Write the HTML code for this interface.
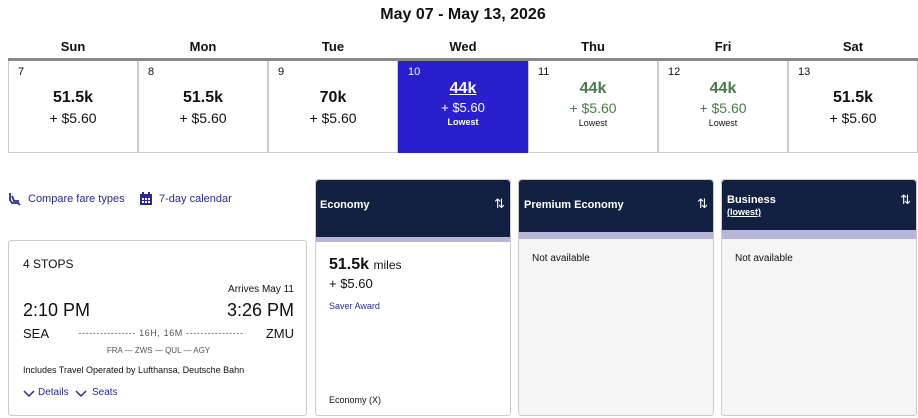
<!DOCTYPE html>
<html><head><style>
*{margin:0;padding:0;box-sizing:border-box}
body{width:918px;height:418px;background:#fff;font-family:"Liberation Sans",sans-serif;color:#111;position:relative;overflow:hidden}
.a{position:absolute}
.title{left:0;width:926px;top:6px;text-align:center;font-size:16px;font-weight:bold}
.dh{top:39px;width:130px;text-align:center;font-size:13px;font-weight:bold}
.bar{left:8px;top:58px;width:910px;height:3px;background:#888}
.cell{top:61px;width:130px;height:92px;border:1px solid #ccc;border-top:none;text-align:center}
.cell .n{position:absolute;left:9px;top:5px;font-size:11px}
.cell .m{margin-top:28px;font-size:16px;font-weight:bold}
.cell .p{font-size:14px;margin-top:3px}
.cell .l{font-size:9px;font-weight:bold;margin-top:2px}
.g{color:#4b7a4a}
.sel{background:#2a1fcc;color:#fff;border-color:#2a1fcc}
.link{color:#2b2a8c;font-size:11px;top:193px}
.card{border:1px solid #ccc;border-radius:3px}
.hd{background:#122142;color:#fff;font-size:11px;font-weight:bold;border-radius:3px 3px 0 0}
.strip{background:#b7b5d8;height:5px}
</style></head><body>
<div class="a title">May 07 - May 13, 2026</div>
<div class="a dh" style="left:8px">Sun</div>
<div class="a dh" style="left:138px">Mon</div>
<div class="a dh" style="left:268px">Tue</div>
<div class="a dh" style="left:398px">Wed</div>
<div class="a dh" style="left:528px">Thu</div>
<div class="a dh" style="left:658px">Fri</div>
<div class="a dh" style="left:788px">Sat</div>
<div class="a bar"></div>
<div class="a cell" style="left:8px"><span class="n">7</span><div class="m">51.5k</div><div class="p">+ $5.60</div></div>
<div class="a cell" style="left:138px"><span class="n">8</span><div class="m">51.5k</div><div class="p">+ $5.60</div></div>
<div class="a cell" style="left:268px"><span class="n">9</span><div class="m">70k</div><div class="p">+ $5.60</div></div>
<div class="a cell sel" style="left:398px"><span class="n">10</span><div class="m" style="margin-top:19px;text-decoration:underline">44k</div><div class="p" style="font-size:13px;margin-top:2px">+ $5.60</div><div class="l">Lowest</div></div>
<div class="a cell" style="left:528px"><span class="n">11</span><div class="m g" style="margin-top:19px">44k</div><div class="p g" style="margin-top:2px">+ $5.60</div><div class="l" style="font-weight:normal">Lowest</div></div>
<div class="a cell" style="left:658px"><span class="n">12</span><div class="m g" style="margin-top:19px">44k</div><div class="p g" style="margin-top:2px">+ $5.60</div><div class="l" style="font-weight:normal">Lowest</div></div>
<div class="a cell" style="left:788px"><span class="n">13</span><div class="m">51.5k</div><div class="p">+ $5.60</div></div>

<svg class="a" style="left:8px;top:192px" width="14" height="14" viewBox="0 0 14 14"><path d="M2 1v7l2 3h7M4 4l2 5h5M10 11l2 2" stroke="#2b2a8c" stroke-width="1.8" fill="none"/></svg>
<div class="a link" style="left:28px">Compare fare types</div>
<svg class="a" style="left:140px;top:192px" width="12" height="13" viewBox="0 0 12 13"><rect x="0" y="2" width="12" height="11" fill="#2b2a8c"/><rect x="2" y="0" width="2" height="3" fill="#2b2a8c"/><rect x="8" y="0" width="2" height="3" fill="#2b2a8c"/><g fill="#fff"><rect x="2" y="6" width="2" height="2"/><rect x="5" y="6" width="2" height="2"/><rect x="8" y="6" width="2" height="2"/><rect x="2" y="9" width="2" height="2"/><rect x="5" y="9" width="2" height="2"/><rect x="8" y="9" width="2" height="2"/></g></svg>
<div class="a link" style="left:159px">7-day calendar</div>

<div class="a card" style="left:8px;top:240px;width:299px;height:176px">
<div class="a" style="left:14px;top:16px;font-size:12px">4 STOPS</div>
<div class="a" style="right:12px;top:43px;font-size:10px">Arrives May 11</div>
<div class="a" style="left:14px;top:59px;font-size:18px">2:10 PM</div>
<div class="a" style="right:12px;top:59px;font-size:18px">3:26 PM</div>
<div class="a" style="left:14px;top:85px;font-size:13px">SEA</div>
<div class="a" style="right:12px;top:85px;font-size:13px">ZMU</div>
<div class="a" style="left:46px;top:87px;width:212px;text-align:center;font-size:9px;color:#555;letter-spacing:0.6px;white-space:nowrap">---------------- 16H, 16M ----------------</div>
<div class="a" style="left:14px;top:105px;width:271px;text-align:center;font-size:8px;color:#555">FRA — ZWS — QUL — AGY</div>
<div class="a" style="left:14px;top:124px;font-size:9px">Includes Travel Operated by Lufthansa, Deutsche Bahn</div>
<svg class="a" style="left:14px;top:149px" width="12" height="8" viewBox="0 0 12 8"><path d="M1 1l5 5 5-5" stroke="#2b2a8c" stroke-width="1.5" fill="none"/></svg>
<div class="a" style="left:29px;top:146px;font-size:10px;color:#2b2a8c">Details</div>
<svg class="a" style="left:66px;top:149px" width="12" height="8" viewBox="0 0 12 8"><path d="M1 1l5 5 5-5" stroke="#2b2a8c" stroke-width="1.5" fill="none"/></svg>
<div class="a" style="left:83px;top:146px;font-size:10px;color:#2b2a8c">Seats</div>
</div>

<div class="a card" style="left:315px;top:179px;width:196px;height:237px;overflow:hidden">
<div class="hd" style="height:57px;padding:19px 0 0 4px">Economy<span style="position:absolute;right:5px;top:16px;font-size:13px;font-weight:normal">⇅</span></div>
<div class="strip"></div>
<div class="a" style="left:13px;top:76px;font-size:16px;font-weight:bold">51.5k <span style="font-size:12px;font-weight:normal">miles</span></div>
<div class="a" style="left:13px;top:96px;font-size:13px">+ $5.60</div>
<div class="a" style="left:13px;top:121px;font-size:9px;color:#2b2a8c">Saver Award</div>
<div class="a" style="left:13px;top:215px;font-size:9px">Economy (X)</div>
</div>
<div class="a card" style="left:518px;top:179px;width:196px;height:237px;background:#f5f5f5;overflow:hidden">
<div class="hd" style="height:52px;padding:19px 0 0 5px">Premium Economy<span style="position:absolute;right:5px;top:16px;font-size:13px;font-weight:normal">⇅</span></div>
<div class="strip" style="height:7px"></div>
<div class="a" style="left:13px;top:73px;font-size:10px">Not available</div>
</div>
<div class="a card" style="left:721px;top:179px;width:196px;height:237px;background:#f5f5f5;overflow:hidden">
<div class="hd" style="height:50px;padding:14px 0 0 5px">Business<br><span style="text-decoration:underline;font-size:9px">(lowest)</span><span style="position:absolute;right:5px;top:12px;font-size:13px;font-weight:normal">⇅</span></div>
<div class="strip" style="height:9px"></div>
<div class="a" style="left:13px;top:73px;font-size:10px">Not available</div>
</div>
</body></html>
